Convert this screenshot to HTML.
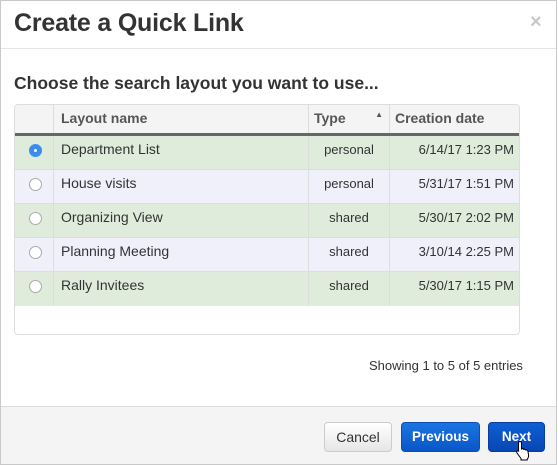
<!DOCTYPE html>
<html><head><style>
*{box-sizing:border-box;margin:0;padding:0}
body{width:558px;height:465px;background:#fff;font-family:"Liberation Sans",sans-serif;color:#333;position:relative;overflow:hidden}
.modal{position:absolute;left:0;top:0;width:557px;height:465px;border:1px solid #c8c8c8;background:#fff}
.hdr{position:absolute;left:0;top:0;right:0;height:48px;border-bottom:1px solid #e5e5e5}
.hdr h1{position:absolute;left:13px;top:8px;font-size:25px;font-weight:bold;color:#333;letter-spacing:-0.2px}
.x{position:absolute;left:529px;top:10px;font-size:20px;color:#c8c8c8;font-weight:bold}
h2{position:absolute;left:13px;top:72px;font-size:17.5px;font-weight:bold;color:#333}
.tbl{position:absolute;left:13px;top:103px;width:506px;height:231px;border:1px solid #ddd;border-radius:4px;overflow:hidden}
.row{position:absolute;left:0;width:504px;height:34px;border-bottom:1px solid #ddd;font-size:14px}
.row div{position:absolute;top:0;height:100%;border-right:1px solid #ddd}
.c1{left:0;width:39px}.c2{left:39px;width:255px;padding:5px 0 0 7px}.c3{left:294px;width:81px;text-align:center;padding-top:6px;font-size:13px}.c4{left:375px;width:129px;text-align:right;padding:6px 5px 0 0;font-size:13px;border-right:none!important}
.head{top:0;height:31px;background:#f4f4f4;border-bottom:3px solid #666;font-weight:bold;color:#555}
.head .c2,.head .c3,.head .c4{padding-top:5px;font-size:14px;text-align:left;padding-left:5px}
.head .c2{padding-left:7px}
.g{background:#dfecdb}.l{background:#eff0fa}
.rad{position:absolute;left:14px;top:8px;width:13px;height:13px;border-radius:50%;border:1px solid #aaa;background:#fff}
.rad.on{background:#3b8cf0;border-color:#3b8cf0}
.rad.on:after{content:"";position:absolute;left:4px;top:4px;width:3px;height:3px;border-radius:50%;background:#fff}
.show{position:absolute;left:368px;top:357px;font-size:13px;color:#333}
.ftr{position:absolute;left:0;right:0;top:405px;bottom:0;background:#f4f4f4;border-top:1px solid #ddd}
.btn{position:absolute;top:15px;height:30px;border-radius:4px;font-size:14px;text-align:center;line-height:28px}
.cancel{left:323px;width:68px;background:linear-gradient(#fff,#e6e6e6);border:1px solid #ccc;color:#333}
.prev{left:400px;width:79px;background:linear-gradient(#1a75e0,#0a56c8);border:1px solid #0a4fb8;color:#fff;font-weight:bold;font-size:13.5px}
.next{left:487px;width:57px;background:linear-gradient(#0e5fd4,#0846b4);border:1px solid #073e9e;color:#fff;font-weight:bold;font-size:13.5px}
</style></head><body>
<div class="modal">
<div class="hdr"><h1>Create a Quick Link</h1><span class="x">×</span></div>
<h2>Choose the search layout you want to use...</h2>
<div class="tbl">
<div class="row head"><div class="c1"></div><div class="c2">Layout name</div><div class="c3">Type<span style="position:absolute;right:6px;top:5px;font-size:8px;color:#555">▲</span></div><div class="c4">Creation date</div></div>
<div class="row g" style="top:31px"><div class="c1"><span class="rad on"></span></div><div class="c2">Department List</div><div class="c3">personal</div><div class="c4">6/14/17 1:23 PM</div></div>
<div class="row l" style="top:65px"><div class="c1"><span class="rad"></span></div><div class="c2">House visits</div><div class="c3">personal</div><div class="c4">5/31/17 1:51 PM</div></div>
<div class="row g" style="top:99px"><div class="c1"><span class="rad"></span></div><div class="c2">Organizing View</div><div class="c3">shared</div><div class="c4">5/30/17 2:02 PM</div></div>
<div class="row l" style="top:133px"><div class="c1"><span class="rad"></span></div><div class="c2">Planning Meeting</div><div class="c3">shared</div><div class="c4">3/10/14 2:25 PM</div></div>
<div class="row g" style="top:167px;border-bottom:none"><div class="c1"><span class="rad"></span></div><div class="c2">Rally Invitees</div><div class="c3">shared</div><div class="c4">5/30/17 1:15 PM</div></div>
</div>
<div class="show">Showing 1 to 5 of 5 entries</div>
<div class="ftr">
<div class="btn cancel">Cancel</div>
<div class="btn prev">Previous</div>
<div class="btn next">Next</div>
<svg style="position:absolute;left:514px;top:33px" width="18" height="22" viewBox="0 0 18 22"><path d="M5 1.5c1 0 1.5.7 1.5 1.5v6l.5-.2c.8-.3 1.6 0 1.8.7l.3-.1c.8-.3 1.6 0 1.8.7.8-.3 1.7 0 1.9.8l.7 3.5c.3 1.7-.2 3.5-1.3 4.8V20H6v-1.5L2 13c-.6-.8-.4-1.7.3-2 .6-.3 1.3 0 1.7.5L3.5 11V3c0-.8.6-1.5 1.5-1.5z" fill="#fff" stroke="#000" stroke-width="1"/></svg>
</div>
</div>
</body></html>
